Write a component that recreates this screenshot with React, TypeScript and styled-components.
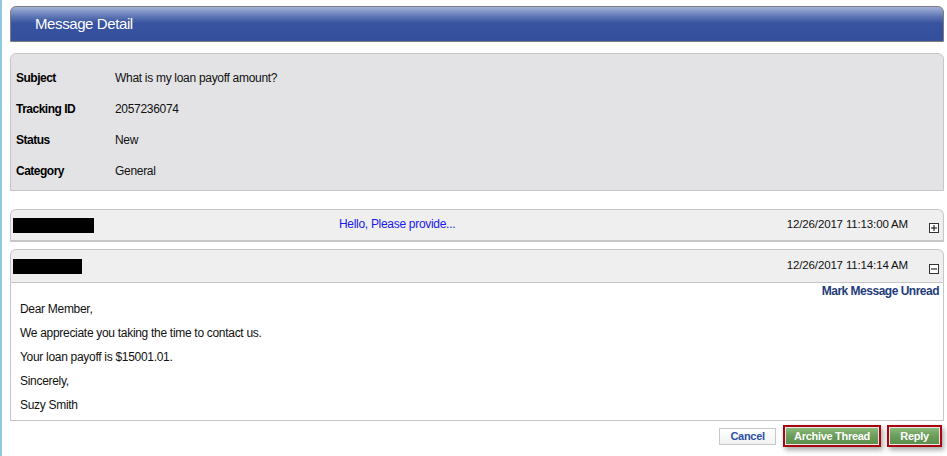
import React from 'react';
import styled, {createGlobalStyle} from "styled-components";

interface IThread {
    nameWidth: number;
    preview?: string;
    date: string;
    expanded: boolean;
}

const details = [
    {label: "Subject", value: "What is my loan payoff amount?"},
    {label: "Tracking ID", value: "2057236074"},
    {label: "Status", value: "New"},
    {label: "Category", value: "General"},
];

const bodyLines = [
    "Dear Member,",
    "We appreciate you taking the time to contact us.",
    "Your loan payoff is $15001.01.",
    "Sincerely,",
    "Suzy Smith",
];

const ToggleIcon: React.FC<{open: boolean}> = ({open}) => (
    <svg width="10" height="10" viewBox="0 0 10 10">
        <rect x="0.5" y="0.5" width="9" height="9" fill="#fff" stroke="#333"/>
        <line x1="2" y1="5" x2="8" y2="5" stroke="#000" strokeWidth="1"/>
        {!open && <line x1="5" y1="2" x2="5" y2="8" stroke="#000" strokeWidth="1"/>}
    </svg>
);

const ThreadHeader: React.FC<IThread> = ({nameWidth, preview, date, expanded}) => (
    <HeaderRow expanded={expanded}>
        <NameCell><Redacted style={{width: nameWidth}}/></NameCell>
        <Preview>{preview}</Preview>
        <DateCell>{date}</DateCell>
        <IconCell><ToggleIcon open={expanded}/></IconCell>
    </HeaderRow>
);

const App: React.FC = () => {
    return (
        <Page>
            <GlobalStyle/>
            <TitleBar>Message Detail</TitleBar>

            <InfoPanel>
                {details.map((d) => (
                    <React.Fragment key={d.label}>
                        <Label>{d.label}</Label>
                        <Value>{d.value}</Value>
                    </React.Fragment>
                ))}
            </InfoPanel>

            <Thread $gap={18}>
                <ThreadHeader nameWidth={81} preview="Hello, Please provide..." date="12/26/2017 11:13:00 AM" expanded={false}/>
            </Thread>

            <Thread $gap={7}>
                <ThreadHeader nameWidth={69} date="12/26/2017 11:14:14 AM" expanded={true}/>
                <MessageBody>
                    <UnreadLink>Mark Message Unread</UnreadLink>
                    {bodyLines.map((l) => <Line key={l}>{l}</Line>)}
                </MessageBody>
            </Thread>

            <Actions>
                <CancelButton>Cancel</CancelButton>
                <Highlight><GreenButton>Archive Thread</GreenButton></Highlight>
                <Highlight><GreenButton>Reply</GreenButton></Highlight>
            </Actions>
        </Page>
    );
};

export default App;

const GlobalStyle = createGlobalStyle`
    html, body {
      margin: 0;
      padding: 0;
      background: #fff;
    }
    body {
      font-family: "Liberation Sans", Arial, sans-serif;
      font-size: 12px;
      color: #000;
    }
`;

const Page = styled.div`
    box-sizing: border-box;
    min-height: 456px;
    width: 947px;
    border-left: 2px solid #8fc8e0;
    padding: 6px 3px 0 8px;
`;

const TitleBar = styled.div`
    box-sizing: border-box;
    height: 36px;
    border: 1px solid #7c7c7c;
    border-radius: 6px 6px 0 0;
    background: linear-gradient(#a3b1d8 0%, #5e76b4 28%, #3853a0 48%, #33509c 100%);
    color: #fff;
    font-size: 15px;
    letter-spacing: -0.4px;
    line-height: 34px;
    padding-left: 24px;
`;

const InfoPanel = styled.div`
    box-sizing: border-box;
    margin-top: 11px;
    height: 138px;
    border: 1px solid #c6c6c6;
    border-radius: 6px 6px 0 0;
    background: #e3e3e5;
    padding: 8px 5px 0 5px;
    display: grid;
    grid-template-columns: 99px 1fr;
    grid-auto-rows: 31px;
    align-items: center;
`;

const Label = styled.div`
    font-weight: bold;
    letter-spacing: -0.5px;
    color: #000;
`;

const Value = styled.div`
    letter-spacing: -0.3px;
    color: #111;
`;

const Thread = styled.div<{$gap: number}>`
    margin-top: ${(p) => p.$gap}px;
`;

const HeaderRow = styled.div<{expanded: boolean}>`
    box-sizing: border-box;
    height: ${(p) => (p.expanded ? 34 : 33)}px;
    border: 1px solid #c6c6c6;
    border-bottom-width: ${(p) => (p.expanded ? 1 : 2)}px;
    border-radius: 6px 6px 0 0;
    background: #efefef;
    display: grid;
    grid-template-columns: 326px 1fr auto 35px;
    align-items: center;
    padding-left: 2px;
`;

const NameCell = styled.div`
    display: flex;
    align-items: center;
`;

const Redacted = styled.div`
    height: 15px;
    background: #000;
`;

const Preview = styled.div`
    color: #1a1aee;
    letter-spacing: -0.3px;
    margin-top: -2px;
`;

const DateCell = styled.div`
    font-size: 11.5px;
    letter-spacing: -0.15px;
    color: #111;
    margin-top: -3px;
`;

const IconCell = styled.div`
    display: flex;
    justify-content: flex-end;
    padding-right: 4px;
    margin-top: 6px;
    svg { display: block; }
`;

const MessageBody = styled.div`
    box-sizing: border-box;
    height: 138px;
    border: 1px solid #c6c6c6;
    border-top: none;
    background: #fff;
    padding: 2px 4px 0 9px;
`;

const UnreadLink = styled.div`
    text-align: right;
    font-weight: bold;
    color: #1f3c7c;
    letter-spacing: -0.5px;
    line-height: 12px;
`;

const Line = styled.div`
    line-height: 24px;
    letter-spacing: -0.3px;
    color: #111;
`;

const Actions = styled.div`
    display: flex;
    justify-content: flex-end;
    align-items: center;
    gap: 6px;
    margin-top: 4px;
    padding-right: 2px;
`;

const CancelButton = styled.div`
    box-sizing: border-box;
    width: 57px;
    height: 17px;
    border: 1px solid #c8c8c8;
    background: linear-gradient(#ffffff, #f2f2f2);
    color: #2d4fa8;
    font-weight: bold;
    font-size: 11px;
    letter-spacing: -0.3px;
    text-align: center;
    line-height: 15px;
    margin-right: 1px;
`;

const Highlight = styled.div`
    border: 2px solid #a8050f;
    padding: 1px;
    box-shadow: 2px 3px 5px rgba(0, 0, 0, 0.35);
    background: #e8e8e8;
`;

const GreenButton = styled.div<{}>`
    height: 16px;
    padding: 0 8px;
    background: linear-gradient(#8cba7c 0%, #6a9c5a 50%, #5c8e4c 100%);
    color: #fff;
    font-weight: bold;
    font-size: 11px;
    letter-spacing: -0.3px;
    line-height: 16px;
    text-align: center;
    min-width: 33px;
`;
